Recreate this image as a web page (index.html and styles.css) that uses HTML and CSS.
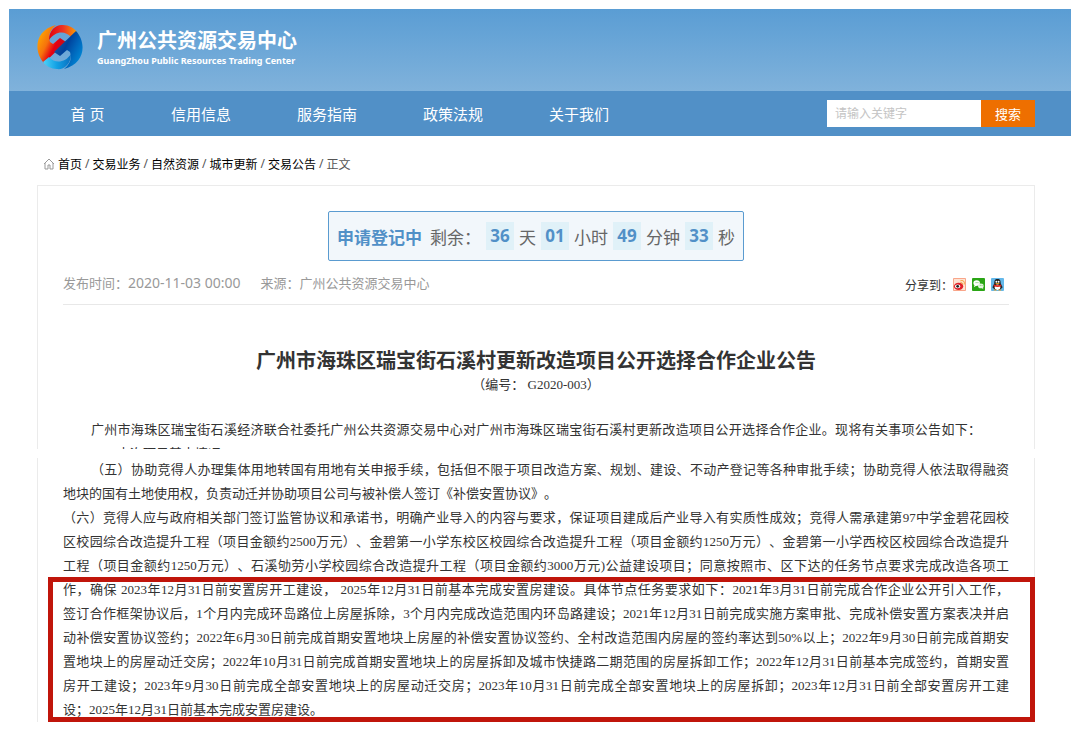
FILE: index.html
```
<!DOCTYPE html>
<html lang="zh-CN">
<head>
  <meta charset="UTF-8" />
  <title>广州公共资源交易中心</title>
  <link rel="stylesheet" href="styles.css">
</head>
<body>
  <header>
    <div class="brand">
      <svg class="logo" viewBox="0 0 46 46" aria-hidden="true">
        <defs>
          <linearGradient id="warm" x1="0" y1="0.2" x2="0.9" y2="0.8">
            <stop offset="0" stop-color="#ffb000" />
            <stop offset="0.4" stop-color="#f6720c" />
            <stop offset="0.65" stop-color="#e60012" />
            <stop offset="1" stop-color="#b4151d" />
          </linearGradient>
          <linearGradient id="red" x1="0" y1="0" x2="1" y2="0">
            <stop offset="0" stop-color="#e3000f" />
            <stop offset="0.5" stop-color="#ee3322" />
            <stop offset="1" stop-color="#fba000" />
          </linearGradient>
          <linearGradient id="blue" x1="0" y1="0.2" x2="0.9" y2="0.8">
            <stop offset="0" stop-color="#0090dc" />
            <stop offset="0.4" stop-color="#0062b8" />
            <stop offset="0.65" stop-color="#00429b" />
            <stop offset="1" stop-color="#1d55a0" />
          </linearGradient>
          <linearGradient id="cyan" x1="0" y1="0" x2="1" y2="0">
            <stop offset="0" stop-color="#0a6fc0" />
            <stop offset="0.5" stop-color="#12a0e4" />
            <stop offset="1" stop-color="#4ed2f8" />
          </linearGradient>
        </defs>
        <path fill="url(#warm)" d="M7 39C-4 27-2 6 19 1C13 6 11 11 13 18L16 20L23 14L29 18Z" />
        <path fill="url(#red)" d="M12 16C12 5 20 0 26 1C32 1 37 4 40 8L34 13C28 6 18 7 12 16Z" />
        <g transform="rotate(180 23 23)">
          <path fill="url(#blue)" d="M7 39C-4 27-2 6 19 1C13 6 11 11 13 18L16 20L23 14L29 18Z" />
          <path fill="url(#cyan)" d="M12 16C12 5 20 0 26 1C32 1 37 4 40 8L34 13C28 6 18 7 12 16Z" />
        </g>
      </svg>
      <div class="brand-text">
        <h1>广州公共资源交易中心</h1>
        <p>GuangZhou Public Resources Trading Center</p>
      </div>
    </div>
    <nav>
      <a href="#" class="home">首 页</a>
      <a href="#">信用信息</a>
      <a href="#">服务指南</a>
      <a href="#">政策法规</a>
      <a href="#">关于我们</a>
      <form class="search">
        <input type="text" placeholder="请输入关键字" aria-label="请输入关键字">
        <button type="submit">搜索</button>
      </form>
    </nav>
  </header>

  <main>
    <div class="crumbs">
      <svg viewBox="0 0 12 12" aria-hidden="true"><path d="M1 6l5-5 5 5M2 5v6h3V7h2v4h3V5" fill="none" stroke="#999" /></svg>
      <a href="#">首页</a> / <a href="#">交易业务</a> / <a href="#">自然资源</a> / <a href="#">城市更新</a> / <a href="#">交易公告</a> / <span>正文</span>
    </div>

    <section class="card notice">
      <div class="countdown">
        <strong>申请登记中</strong>
        <span>剩余：</span>
        <b>36</b><span>天</span>
        <b>01</b><span>小时</span>
        <b>49</b><span>分钟</span>
        <b>33</b><span>秒</span>
      </div>
      <div class="meta">
        <span>发布时间：<time>2020-11-03 00:00</time></span>
        <span>来源：广州公共资源交易中心</span>
        <div class="share">
          分享到：
          <div class="share-icons">
            <a href="#" aria-label="微博">
              <svg viewBox="0 0 14 14">
                <rect width="14" height="14" rx="1" fill="#f9a184" />
                <rect x="1" y="1" width="12" height="12" fill="#fde3d3" />
                <path d="M8 3c3-1 5 1 4 4M8 5c2 0 3 1 2 2" fill="none" stroke="#f29a1f" />
                <ellipse cx="6" cy="9" rx="5" ry="4" fill="#e0222b" />
                <ellipse cx="5" cy="9" rx="3" ry="2" fill="#fff" />
                <circle cx="5" cy="9" r="1.500" fill="#222" />
              </svg>
            </a>
            <a href="#" aria-label="微信">
              <svg viewBox="0 0 14 14">
                <rect width="14" height="14" rx="1" fill="#2aa515" />
                <ellipse cx="5" cy="5.500" rx="3.500" ry="3" fill="#fff" />
                <path d="M3 7l-1 3 3-2z" fill="#fff" />
                <ellipse cx="9.500" cy="8.500" rx="3" ry="2.500" fill="#e4f7df" />
                <path d="M10 10l2 2v-3z" fill="#e4f7df" />
                <path d="M4 5h.8M6 5h.8M8.500 8h.6M10.500 8h.6" stroke="#2aa515" />
              </svg>
            </a>
            <a href="#" aria-label="QQ">
              <svg viewBox="0 0 14 14">
                <rect width="14" height="14" rx="1" fill="#64b8ea" />
                <path d="M7 1C4 1 3.500 3 3.500 6L1.500 10l1 1 2 2h5l2-2 1-1-2-4c0-3-.5-5-3.500-5z" fill="#222" />
                <ellipse cx="7" cy="10" rx="3" ry="3" fill="#fff" />
                <path d="M3 7c3 1 5 1 8 0v2c-3 1-5 1-8 0z" fill="#e2231a" />
                <circle cx="5.800" cy="4" r="1" fill="#fff" />
                <circle cx="8.200" cy="4" r="1" fill="#fff" />
                <path d="M5 6h4M3 13h3M8 13h3" stroke="#f5a623" />
              </svg>
            </a>
          </div>
        </div>
      </div>
      <h2>广州市海珠区瑞宝街石溪村更新改造项目公开选择合作企业公告</h2>
      <p class="number">（编号： G2020-003）</p>
      <p class="intro">广州市海珠区瑞宝街石溪经济联合社委托广州公共资源交易中心对广州市海珠区瑞宝街石溪村更新改造项目公开选择合作企业。现将有关事项公告如下：</p>
      <p class="cut">一、本次项目基本情况</p>
    </section>

    <section class="card terms">
      <p class="full indent">（五）协助竞得人办理集体用地转国有用地有关申报手续，包括但不限于项目改造方案、规划、建设、不动产登记等各种审批手续；协助竞得人依法取得融资</p>
      <p>地块的国有土地使用权，负责动迁并协助项目公司与被补偿人签订《补偿安置协议》。</p>
      <p class="full">（六）竞得人应与政府相关部门签订监管协议和承诺书，明确产业导入的内容与要求，保证项目建成后产业导入有实质性成效；竞得人需承建第97中学金碧花园校<br>
        区校园综合改造提升工程（项目金额约2500万元）、金碧第一小学东校区校园综合改造提升工程（项目金额约1250万元）、金碧第一小学西校区校园综合改造提升<br>
        工程（项目金额约1250万元）、石溪劬劳小学校园综合改造提升工程（项目金额约3000万元)公益建设项目；同意按照市、区下达的任务节点要求完成改造各项工</p>
      <div class="marked">
        <p class="full">作，确保 2023年12月31日前安置房开工建设， 2025年12月31日前基本完成安置房建设。具体节点任务要求如下：2021年3月31日前完成合作企业公开引入工作，<br>
          签订合作框架协议后，1个月内完成环岛路位上房屋拆除，3个月内完成改造范围内环岛路建设；2021年12月31日前完成实施方案审批、完成补偿安置方案表决并启<br>
          动补偿安置协议签约；2022年6月30日前完成首期安置地块上房屋的补偿安置协议签约、全村改造范围内房屋的签约率达到50%以上；2022年9月30日前完成首期安<br>
          置地块上的房屋动迁交房；2022年10月31日前完成首期安置地块上的房屋拆卸及城市快捷路二期范围的房屋拆卸工作；2022年12月31日前基本完成签约，首期安置<br>
          房开工建设；2023年9月30日前完成全部安置地块上的房屋动迁交房；2023年10月31日前完成全部安置地块上的房屋拆卸；2023年12月31日前全部安置房开工建</p>
        <p>设；2025年12月31日前基本完成安置房建设。</p>
      </div>
    </section>
  </main>
</body>
</html>
```
FILE: styles.css
```
* { box-sizing: border-box; }
body {
  margin: 9px;
  background: #fff;
  color: #333;
  font-family: "Noto Sans", "Noto Sans CJK SC", sans-serif;
  text-spacing-trim: space-all;
}
h1, h2, p { margin: 0; }
a { color: inherit; text-decoration: none; }

header { color: #fff; }
.brand {
  display: flex;
  align-items: center;
  gap: 14px;
  height: 82px;
  padding: 0 28px 6px;
  background: linear-gradient(#5a9dd4, #80b2db);
}
.logo { width: 46px; height: 46px; }
.brand-text { padding-top: 4px; }
.brand h1 { font-size: 20px; line-height: 24px; }
.brand p { font-size: 9px; line-height: 16px; font-weight: bold; }

nav {
  display: flex;
  align-items: center;
  height: 45px;
  padding: 0 36px 0 28px;
  background: #5190c7;
  font-size: 15px;
}
nav a { width: 126px; text-align: center; }
nav .home { width: 101px; }
.search { display: flex; height: 27px; margin-left: auto; }
.search input {
  width: 154px;
  padding: 0 8px;
  border: none;
  background: #fff;
  font-family: inherit;
  font-size: 12px;
}
.search input::placeholder { color: #c4c4c4; }
.search button {
  width: 54px;
  padding: 0;
  border: none;
  background: #ee6f00;
  color: #fff;
  font-family: inherit;
  font-size: 13px;
  cursor: pointer;
}

main { padding: 0 36px 0 28px; }
.crumbs {
  display: flex;
  align-items: center;
  gap: 3px;
  height: 49px;
  padding: 6px 6px 0;
  font-size: 12px;
  color: #555;
}
.crumbs a { color: #000; }
.crumbs svg { width: 12px; height: 12px; }

.card {
  border: 1px solid #ebebeb;
  padding: 0 25px;
  overflow: hidden;
  font-size: 13px;
}
.notice { height: 264px; padding-top: 25px; border-bottom: none; }
.countdown {
  display: flex;
  align-items: center;
  gap: 5px;
  width: fit-content;
  height: 50px;
  margin: 0 auto;
  padding: 0 8px;
  border: 1px solid #5a9bd0;
  border-radius: 2px;
  background: #f2f7fb;
  color: #666;
  font-size: 17px;
}
.countdown strong { margin-right: 3px; color: #5190c7; }
.countdown b {
  width: 28px;
  background: #e0f1f8;
  color: #5190c7;
  line-height: 28px;
  text-align: center;
}
.meta {
  display: flex;
  align-items: center;
  gap: 20px;
  height: 44px;
  border-bottom: 1px solid #e8e8e8;
  color: #999;
}
.meta time { font-size: 14px; }
.share {
  display: flex;
  align-items: center;
  margin-left: auto;
  padding: 4px 5px 0 0;
  color: #333;
  font-size: 12px;
}
.share-icons { display: flex; gap: 6px; }
.share svg { display: block; width: 13px; height: 13px; }
.notice h2 { margin-top: 40px; font-size: 20px; line-height: 32px; text-align: center; }
.number, .intro, .cut, .terms { font-family: "Liberation Serif", "Noto Sans CJK SC", serif; }
.number { line-height: 16px; text-align: center; }
.intro, .cut { padding: 0 28px; line-height: 24px; }
.intro { margin-top: 25px; text-align: justify; text-align-last: justify; }

.terms {
  margin-top: 9px;
  border-top: none;
  border-bottom: none;
  overflow: visible;
  line-height: 24px;
}
.full { text-align: justify; text-align-last: justify; white-space: nowrap; }
.indent { padding-left: 28px; }
.marked { position: relative; }
.marked::before {
  content: "";
  position: absolute;
  inset: -1px -26px 0 -15px;
  border: 5px solid #c0150b;
}
```
